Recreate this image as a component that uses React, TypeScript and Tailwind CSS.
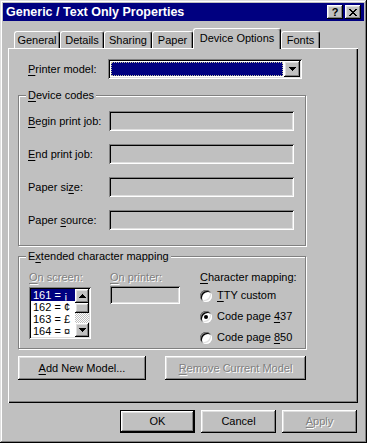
import React from 'react'

const raised = 'shadow-[inset_-1px_-1px_#000,inset_1px_1px_#fff,inset_-2px_-2px_#808080,inset_2px_2px_#dfdfdf]'
const sunken = 'shadow-[inset_1px_1px_#808080,inset_-1px_-1px_#fff,inset_2px_2px_#000,inset_-2px_-2px_#dfdfdf]'
const etched = 'border border-[#808080] shadow-[1px_1px_0_#fff,inset_1px_1px_0_#fff]'
const dim = 'text-[#808080] [text-shadow:1px_1px_0_#fff]'

function U({ children }: { children: React.ReactNode }) {
  return <span className="underline underline-offset-[2px]">{children}</span>
}

function ArrowUp() {
  return (
    <svg width="7" height="4" viewBox="0 0 7 4" shapeRendering="crispEdges">
      <path d="M3 0h1v1h1v1h1v1h1v1H0V3h1V2h1V1h1z" fill="#000" />
    </svg>
  )
}

function ArrowDown() {
  return (
    <svg width="7" height="4" viewBox="0 0 7 4" shapeRendering="crispEdges">
      <path d="M0 0h7v1H6v1H5v1H4v1H3V3H2V2H1V1H0z" fill="#000" />
    </svg>
  )
}

const tabs = [
  { label: 'General', w: 'w-[46px]' },
  { label: 'Details', w: 'w-[44px]' },
  { label: 'Sharing', w: 'w-[48px]' },
  { label: 'Paper', w: 'w-[41px]' },
  { label: 'Device Options', w: 'w-[88px]', active: true },
  { label: 'Fonts', w: 'w-[39px]' },
]

function Group({ title, className, children }: { title: React.ReactNode; className?: string; children: React.ReactNode }) {
  return (
    <div className={`relative ${etched} ${className ?? ''}`}>
      <span className="absolute -top-[7px] left-[7px] bg-[#c0c0c0] px-[2px] leading-[13px]">{title}</span>
      {children}
    </div>
  )
}

function CodeRow({ label }: { label: React.ReactNode }) {
  return (
    <div className="flex h-[20px] items-center">
      <span className="w-[81px]">{label}</span>
      <div className={`h-[20px] w-[185px] bg-[#c0c0c0] ${sunken}`} />
    </div>
  )
}

function Radio({ checked, children }: { checked?: boolean; children: React.ReactNode }) {
  return (
    <div className="flex h-[21px] items-center">
      <span className="flex h-[12px] w-[12px] items-center justify-center rounded-full bg-white shadow-[inset_1px_1px_#808080,inset_-1px_-1px_#fff,inset_2px_2px_#000,inset_-2px_-2px_#dfdfdf]">
        {checked && <span className="h-[4px] w-[4px] rounded-full bg-black" />}
      </span>
      <span className="ml-[5px]">{children}</span>
    </div>
  )
}

function Btn({ children, className, disabled, isDefault }: { children: React.ReactNode; className?: string; disabled?: boolean; isDefault?: boolean }) {
  return (
    <div
      className={`flex items-center justify-center bg-[#c0c0c0] ${raised} ${isDefault ? 'border border-black' : ''} ${disabled ? dim : ''} ${className ?? ''}`}
    >
      {children}
    </div>
  )
}

const charItems = ['161 = ¡', '162 = ¢', '163 = £', '164 = ¤']

export default function App() {
  return (
    <div className="h-[443px] w-[367px] select-none bg-[#c0c0c0] p-[3px] font-['Liberation_Sans',Arial,sans-serif] text-[11px] leading-[13px] text-black shadow-[inset_-1px_-1px_#000,inset_1px_1px_#dfdfdf,inset_-2px_-2px_#808080,inset_2px_2px_#fff]">
      {/* title bar */}
      <div className="flex h-[18px] items-center bg-[#000080] pl-[3px] pr-[3px]">
        <span className="flex-1 text-[12.5px] font-bold leading-[18px] text-white">Generic / Text Only Properties</span>
        <div className={`flex h-[14px] w-[16px] items-center justify-center bg-[#c0c0c0] text-[11px] font-bold leading-none ${raised}`}>?</div>
        <div className={`ml-[2px] flex h-[14px] w-[16px] items-center justify-center bg-[#c0c0c0] ${raised}`}>
          <svg width="8" height="7" viewBox="0 0 8 7" shapeRendering="crispEdges">
            <path d="M0 0h2v1h1v1h2V1h1V0h2v1H7v1H6v1H5v1h1v1h1v1h1v1H6V6H5V5H3v1H2v1H0V6h1V5h1V4h1V3H2V2H1V1H0z" fill="#000" />
          </svg>
        </div>
      </div>

      {/* tabs */}
      <div className="ml-[11px] mt-[7px] flex h-[20px] items-end">
        {tabs.map((t) =>
          t.active ? (
            <div
              key={t.label}
              className={`relative z-10 -mb-px flex h-[21px] items-start justify-center rounded-t-[3px] border-l border-t border-r border-white border-r-black bg-[#c0c0c0] pt-[3px] shadow-[inset_-1px_0_#808080] ${t.w}`}
            >
              {t.label}
            </div>
          ) : (
            <div
              key={t.label}
              className={`flex h-[17px] items-center justify-center rounded-t-[3px] border-l border-t border-r border-white border-r-black shadow-[inset_-1px_0_#808080] ${t.w}`}
            >
              {t.label}
            </div>
          ),
        )}
      </div>

      {/* panel */}
      <div className="ml-[5px] h-[355px] w-[350px] shadow-[inset_1px_1px_#fff,inset_-1px_-1px_#000,inset_-2px_-2px_#808080] pt-[11px]">
        <div className="flex h-[20px] items-center">
          <span className="w-[100px] pl-[20px]">
            <U>P</U>rinter model:
          </span>
          <div className={`flex h-[20px] w-[194px] items-center bg-white p-[2px] ${sunken}`}>
            <div className="m-[1px] h-[14px] flex-1 border border-dotted border-[#c0c0a0] bg-[#000080]" />
            <div className={`flex h-[16px] w-[16px] items-center justify-center bg-[#c0c0c0] ${raised}`}>
              <ArrowDown />
            </div>
          </div>
        </div>

        <Group title={<><U>D</U>evice codes</>} className="ml-[10px] mt-[16px] w-[288px]">
          <div className="flex flex-col gap-[13px] pb-[15px] pl-[9px] pt-[15px]">
            <CodeRow label={<><U>B</U>egin print job:</>} />
            <CodeRow label={<><U>E</U>nd print job:</>} />
            <CodeRow label={<>Paper si<U>z</U>e:</>} />
            <CodeRow label={<>Paper <U>s</U>ource:</>} />
          </div>
        </Group>

        <Group title={<>E<U>x</U>tended character mapping</>} className="ml-[10px] mt-[10px] h-[93px] w-[288px]">
          <div className="flex pl-[10px] pt-[14px]">
            <div className="w-[81px]">
              <div className={dim}>
                <U>O</U>n screen:
              </div>
              <div className={`mt-[3px] flex h-[52px] w-[62px] bg-white p-[2px] ${sunken}`}>
                <div className="flex-1 text-[11px] leading-[12px]">
                  {charItems.map((c, i) => (
                    <div key={c} className={`h-[12px] overflow-hidden pl-[2px] ${i === 0 ? 'bg-[#000080] text-white' : ''}`}>
                      {c}
                    </div>
                  ))}
                </div>
                <div className="flex w-[14px] flex-col">
                  <div className={`flex h-[14px] items-center justify-center bg-[#c0c0c0] ${raised}`}>
                    <ArrowUp />
                  </div>
                  <div className={`h-[10px] bg-[#c0c0c0] ${raised}`} />
                  <div className="flex-1 bg-[repeating-conic-gradient(#fff_0%_25%,#c0c0c0_0%_50%)] bg-[length:2px_2px]" />
                  <div className={`flex h-[14px] items-center justify-center bg-[#c0c0c0] ${raised}`}>
                    <ArrowDown />
                  </div>
                </div>
              </div>
            </div>
            <div className="w-[90px]">
              <div className={dim}>
                <U>O</U>n printer:
              </div>
              <div className={`mt-[2px] h-[18px] w-[70px] bg-[#c0c0c0] ${sunken}`} />
            </div>
            <div>
              <div>
                <U>C</U>haracter mapping:
              </div>
              <div className="mt-[1px]">
                <Radio>
                  <U>T</U>TY custom
                </Radio>
                <Radio checked>
                  Code page <U>4</U>37
                </Radio>
                <Radio>
                  Code page <U>8</U>50
                </Radio>
              </div>
            </div>
          </div>
        </Group>

        <div className="ml-[10px] mt-[7px] flex gap-[19px]">
          <Btn className="h-[24px] w-[128px]">
            <span>
              <U>A</U>dd New Model...
            </span>
          </Btn>
          <Btn className="h-[24px] w-[141px]" disabled>
            <span>
              <U>R</U>emove Current Model
            </span>
          </Btn>
        </div>
      </div>

      {/* dialog buttons */}
      <div className="ml-[117px] mt-[7px] flex gap-[6px]">
        <Btn className="h-[23px] w-[75px]" isDefault>
          OK
        </Btn>
        <Btn className="h-[23px] w-[75px]">Cancel</Btn>
        <Btn className="h-[23px] w-[75px]" disabled>
          <span>
            <U>A</U>pply
          </span>
        </Btn>
      </div>
    </div>
  )
}
